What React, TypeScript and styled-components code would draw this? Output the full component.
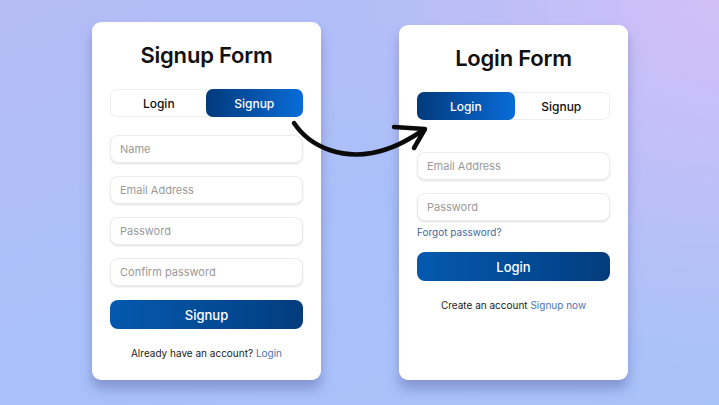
import * as React from "react";
import styled, { createGlobalStyle } from "styled-components";

const GlobalStyle = createGlobalStyle`
  html, body {
    margin: 0;
    padding: 0;
  }
  body {
    font-family: "Inter", "Noto Sans", sans-serif;
    width: 719px;
    height: 405px;
    overflow: hidden;
  }
`;

export default () => {
  return (
    <Page>
      <GlobalStyle />
      <Card $top={22} $height={358}>
        <Title>Signup Form</Title>
        <Tabs>
          <Tab>Login</Tab>
          <Tab $active>Signup</Tab>
        </Tabs>
        <Fields $top={18}>
          <Input placeholder="Name" />
          <Input placeholder="Email Address" />
          <Input placeholder="Password" />
          <Input placeholder="Confirm password" />
        </Fields>
        <Submit $top={14}>Signup</Submit>
        <Footer $top={18}>
          Already have an account? <Link>Login</Link>
        </Footer>
      </Card>
      <Card $top={25} $height={355}>
        <Title>Login Form</Title>
        <Tabs>
          <Tab $active>Login</Tab>
          <Tab>Signup</Tab>
        </Tabs>
        <Fields $top={32}>
          <Input placeholder="Email Address" />
          <Input placeholder="Password" />
        </Fields>
        <Forgot>Forgot password?</Forgot>
        <Submit $top={14}>Login</Submit>
        <Footer $top={18}>
          Create an account <Link>Signup now</Link>
        </Footer>
      </Card>
      <Arrow width="719" height="405" viewBox="0 0 719 405">
        <path
          d="M294 123 C 312 150, 345 158, 372 153 C 393 149, 408 140, 422 131"
          fill="none"
          stroke="#0a0a0a"
          strokeWidth="4.5"
          strokeLinecap="round"
        />
        <path
          d="M394 127 L 425 129 L 414 148"
          fill="none"
          stroke="#0a0a0a"
          strokeWidth="4.5"
          strokeLinecap="round"
          strokeLinejoin="round"
        />
      </Arrow>
    </Page>
  );
};

const Page = styled.div`
  position: relative;
  width: 719px;
  height: 405px;
  box-sizing: border-box;
  padding-left: 92px;
  display: flex;
  align-items: flex-start;
  gap: 78px;
  background:
    radial-gradient(circle at 100% 0%, #d3bff8 0%, rgba(211, 191, 248, 0) 45%),
    linear-gradient(160deg, #b6bcf6 0%, #a9c0f8 55%, #a8c3f8 100%);
`;

const Card = styled.div<{ $top: number; $height: number }>`
  margin-top: ${(p) => p.$top}px;
  width: 229px;
  height: ${(p) => p.$height}px;
  box-sizing: border-box;
  padding: 19px 18px 0;
  background: #ffffff;
  border-radius: 9px;
  box-shadow: 0 9px 12px rgba(70, 70, 140, 0.35);
  display: flex;
  flex-direction: column;
`;

const Title = styled.h1`
  margin: 0;
  height: 28px;
  line-height: 28px;
  text-align: center;
  font-size: 22px;
  font-weight: 600;
  color: #111111;
  letter-spacing: -0.2px;
`;

const Tabs = styled.div`
  margin-top: 20px;
  height: 28px;
  display: grid;
  grid-template-columns: 1fr 1fr;
  border: 1px solid #efefef;
  border-radius: 7px;
  box-sizing: border-box;
  background: #ffffff;
`;

const Tab = styled.div<{ $active?: boolean }>`
  display: flex;
  align-items: center;
  justify-content: center;
  margin: -1px;
  border-radius: 7px;
  font-size: 12px;
  font-weight: 500;
  color: ${(p) => (p.$active ? "#ffffff" : "#111111")};
  background: ${(p) =>
    p.$active ? "linear-gradient(90deg, #013a7b 0%, #0a6cd8 100%)" : "transparent"};
`;

const Fields = styled.div<{ $top: number }>`
  margin-top: ${(p) => p.$top}px;
  display: flex;
  flex-direction: column;
  gap: 13px;
`;

const Input = styled.input`
  height: 28px;
  box-sizing: border-box;
  border: 1px solid #ececec;
  border-radius: 8px;
  box-shadow: 0 1px 2px rgba(0, 0, 0, 0.12);
  padding: 0 9px;
  font-family: inherit;
  font-size: 11px;
  outline: none;
  &::placeholder {
    color: #9a9a9a;
  }
`;

const Forgot = styled.div`
  margin-top: 5px;
  line-height: 12px;
  font-size: 10px;
  color: #46689e;
`;

const Submit = styled.button<{ $top: number }>`
  margin-top: ${(p) => p.$top}px;
  height: 29px;
  border: none;
  border-radius: 8px;
  background: linear-gradient(90deg, #0559ae 0%, #03468e 70%, #043c7c 100%);
  color: #ffffff;
  font-family: inherit;
  font-size: 13px;
  font-weight: 500;
`;

const Footer = styled.div<{ $top: number }>`
  margin-top: ${(p) => p.$top}px;
  line-height: 12px;
  text-align: center;
  font-size: 10px;
  color: #1a1a1a;
`;

const Link = styled.span`
  color: #4a74b4;
`;

const Arrow = styled.svg`
  position: absolute;
  left: 0;
  top: 0;
  pointer-events: none;
`;
